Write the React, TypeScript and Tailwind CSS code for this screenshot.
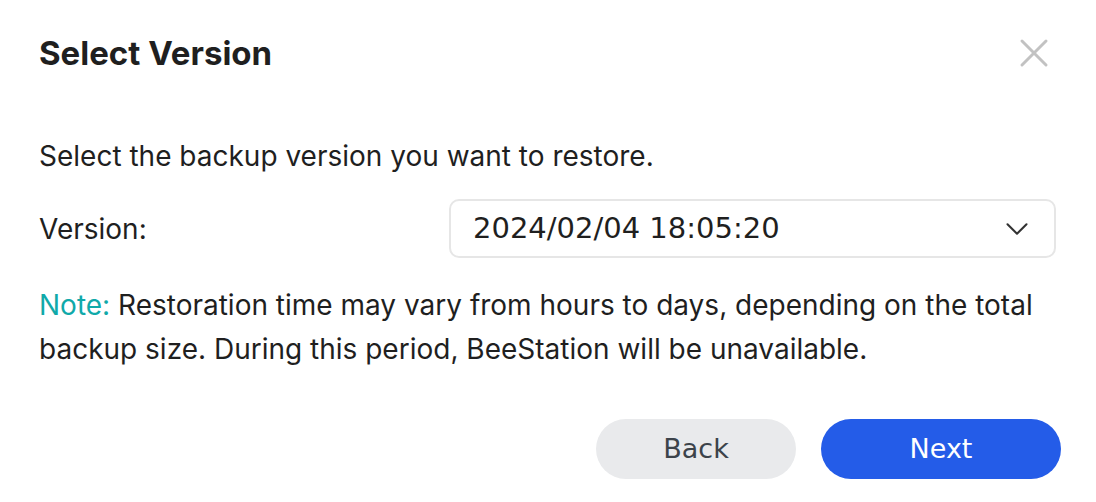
import { X, ChevronDown } from "lucide-react";

export default function App() {
    return (
        <div className="w-[1096px] h-[502px] bg-white text-[#1f1f1f] font-['Inter',sans-serif]">
            <div className="flex items-center justify-between pl-[39px] pr-[38px] pt-[29px]">
                <h1 className="text-[33px] font-bold leading-[40px]">
                    Select Version
                </h1>
                <X
                    className="text-[#c2c2c2]"
                    size={48}
                    strokeWidth={1.5}
                />
            </div>
            <div className="px-[39px] pt-[61px]">
                <p className="text-[28px] leading-[36px]">
                    Select the backup version you want to restore.
                </p>
                <div className="flex items-center mt-[25px]">
                    <span className="text-[28px] w-[410px]">
                        Version:
                    </span>
                    <div className="flex items-center justify-between w-[607px] h-[59px] border-2 border-[#e6e6e6] rounded-[10px] pl-[22px] pr-[18px]">
                        <span className="text-[29px] font-['DejaVu_Sans',sans-serif]">
                            2024/02/04 18:05:20
                        </span>
                        <ChevronDown
                            className="text-[#333]"
                            size={38}
                            strokeWidth={1.3}
                        />
                    </div>
                </div>
                <p className="text-[28px] leading-[44px] mt-[25px]">
                    <span className="text-[#10a9a9]">Note:</span> Restoration time may vary from hours to days, depending on the total backup size. During this period, BeeStation will be unavailable.
                </p>
            </div>
            <div className="flex justify-end gap-[25px] pr-[35px] mt-[48px] font-['DejaVu_Sans',sans-serif]">
                <button className="w-[200px] h-[60px] rounded-full bg-[#e9eaec] text-[#3c434a] text-[27px]">
                    Back
                </button>
                <button className="w-[240px] h-[60px] rounded-full bg-[#245ce8] text-white text-[27px]">
                    Next
                </button>
            </div>
        </div>
    );
}
